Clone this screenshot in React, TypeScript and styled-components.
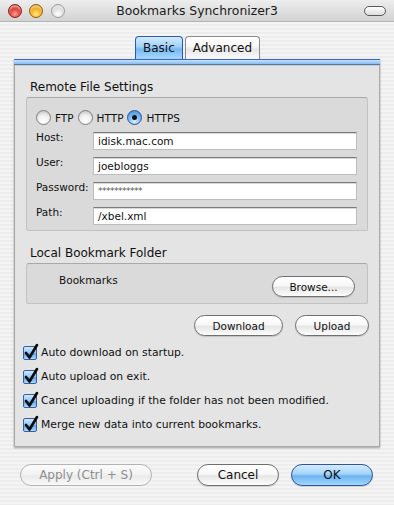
import React from "react";
import styled, { createGlobalStyle, css } from "styled-components";

const Global = createGlobalStyle`
  html, body { margin: 0; padding: 0; }
  body {
    width: 394px;
    height: 505px;
    overflow: hidden;
    font-family: "DejaVu Sans", "Liberation Sans", sans-serif;
    color: #111;
    background: repeating-linear-gradient(180deg, #ededed 0px, #ededed 2px, #f4f4f4 2px, #f4f4f4 4px);
  }
`;

const Window = styled.div`
  width: 394px;
  height: 505px;
  display: flex;
  flex-direction: column;
`;

const TitleBar = styled.div`
  height: 21px;
  border-bottom: 1px solid #b4b4b4;
  background: linear-gradient(180deg, #eeeeee 0%, #e0e0e0 50%, #d2d2d2 100%);
  display: grid;
  grid-template-columns: 1fr auto 1fr;
  align-items: center;
`;

const Lights = styled.div`
  display: flex;
  gap: 7px;
  padding-left: 8px;
  align-items: center;
`;

const Light = styled.span<{ $c: "red" | "orange" | "gray" }>`
  width: 14px;
  height: 14px;
  border-radius: 50%;
  box-sizing: border-box;
  ${(p) =>
    p.$c === "red"
      ? css`
          border: 1px solid #8c1e1a;
          background: radial-gradient(circle at 50% 75%, #ff9e95 0%, #e0443c 45%, #a81912 100%);
        `
      : p.$c === "orange"
      ? css`
          border: 1px solid #9a5a00;
          background: radial-gradient(circle at 50% 75%, #ffe88a 0%, #f5b422 45%, #c16f00 100%);
          margin-right: 1px;
        `
      : css`
          border: 1px solid #9d9d9d;
          background: radial-gradient(circle at 50% 75%, #ffffff 0%, #e2e2e2 45%, #b5b5b5 100%);
        `}
  box-shadow: inset 0 2px 2px rgba(255, 255, 255, 0.6);
`;

const Title = styled.div`
  font-size: 12.4px;
  color: #1a1a1a;
  line-height: 14px;
  padding-top: 1px;
`;

const ToolbarPill = styled.span`
  justify-self: end;
  margin-right: 8px;
  width: 20px;
  height: 8px;
  border: 1px solid #5a5a5a;
  border-radius: 5px;
  background: linear-gradient(180deg, #ffffff, #dcdcdc);
`;

const Tabs = styled.div`
  display: flex;
  justify-content: center;
  gap: 2px;
  margin-top: 14px;
  padding-left: 1px;
`;

const Tab = styled.div<{ $active?: boolean }>`
  height: 23px;
  box-sizing: border-box;
  padding: 0 7px;
  font-size: 12px;
  line-height: 22px;
  border-radius: 4px 4px 0 0;
  border: 1px solid ${(p) => (p.$active ? "#2f58b4" : "#8a8a8a")};
  border-bottom: none;
  color: #111;
  background: ${(p) =>
    p.$active
      ? "linear-gradient(180deg, #d3ebfd 0%, #9fd0f7 45%, #76b7f0 55%, #a7daff 100%)"
      : "linear-gradient(180deg, #ffffff 0%, #f6f6f6 45%, #e6e6e6 55%, #fbfbfb 100%)"};
`;

const Pane = styled.div`
  margin: 0 14px;
  display: flex;
  flex-direction: column;
  box-shadow: 0 1px 2px rgba(0, 0, 0, 0.35);
`;

const PaneStrip = styled.div`
  height: 4px;
  border-top: 1px solid #3c66c0;
  border-bottom: 1px solid #5677a8;
  background: linear-gradient(180deg, #c5e2fb, #86bdf0);
`;

const PaneBody = styled.div`
  background: #e4e4e4;
  border: 1px solid #a8a8a8;
  border-top: 1px solid #c9c9c9;
  padding: 14px 11px 13px 11px;
  display: flex;
  flex-direction: column;
`;

const GroupTitle = styled.div<{ $gap?: number }>`
  font-size: 12px;
  line-height: 14px;
  color: #111;
  padding-left: 4px;
  margin-top: ${(p) => p.$gap ?? 0}px;
  margin-bottom: 3px;
`;

const GroupBox = styled.div`
  background: #dadada;
  border: 1px solid #c2c2c2;
  border-top-color: #a9a9a9;
  border-radius: 3px 3px 2px 2px;
`;

const RemoteBox = styled(GroupBox)`
  padding: 12px 10px 5px 9px;
  display: flex;
  flex-direction: column;
  gap: 7px;
`;

const RadioRow = styled.div`
  display: flex;
  align-items: center;
  height: 15px;
`;

const RadioItem = styled.label`
  display: flex;
  align-items: center;
  gap: 4px;
  font-size: 10.5px;
  margin-right: 4px;
`;

const RadioDot = styled.span<{ $on?: boolean }>`
  width: 15px;
  height: 15px;
  box-sizing: border-box;
  border-radius: 50%;
  display: flex;
  align-items: center;
  justify-content: center;
  border: 1px solid ${(p) => (p.$on ? "#30519a" : "#7d7d7d")};
  background: ${(p) =>
    p.$on
      ? "radial-gradient(circle at 50% 80%, #d6f0ff 0%, #76b9f2 50%, #3d7fd6 100%)"
      : "radial-gradient(circle at 50% 80%, #ffffff 0%, #f0f0f0 50%, #b8b8b8 100%)"};
  &::after {
    content: "";
    display: ${(p) => (p.$on ? "block" : "none")};
    width: 5px;
    height: 5px;
    border-radius: 50%;
    background: #111;
  }
`;

const FieldGrid = styled.div`
  display: grid;
  grid-template-columns: 57px 1fr;
  row-gap: 7px;
`;

const FieldLabel = styled.div`
  font-size: 10.5px;
  line-height: 13px;
  margin-top: -1px;
`;

const Input = styled.div<{ $secret?: boolean }>`
  height: 18px;
  box-sizing: border-box;
  background: #fff;
  border: 1px solid #bdbdbd;
  border-top: 1px solid #7b7b7b;
  box-shadow: inset 0 1px 0 #d8d8d8;
  padding-left: 4px;
  font-size: ${(p) => (p.$secret ? "9px" : "10.5px")};
  line-height: ${(p) => (p.$secret ? "17px" : "16px")};
  color: ${(p) => (p.$secret ? "#555" : "#111")};
  letter-spacing: ${(p) => (p.$secret ? "-0.5px" : "0")};
`;

const LocalBox = styled(GroupBox)`
  padding: 12px 12px 6px 32px;
  display: flex;
  justify-content: space-between;
  align-items: flex-start;
`;

const FolderName = styled.div`
  font-size: 10.5px;
  line-height: 13px;
  margin-top: -2px;
`;

const Button = styled.button<{ $size?: "small" | "large"; $w: number; $default?: boolean }>`
  width: ${(p) => p.$w}px;
  height: ${(p) => (p.$size === "large" ? 22 : 21)}px;
  border-radius: 11px;
  box-sizing: border-box;
  font-family: "DejaVu Sans", "Liberation Sans", sans-serif;
  font-size: ${(p) => (p.$size === "large" ? "12px" : "10.5px")};
  color: #111;
  padding: 0;
  border: 1px solid ${(p) => (p.$default ? "#34529e" : "#6f6f6f")};
  background: ${(p) =>
    p.$default
      ? "linear-gradient(180deg, #d3ecfe 0%, #a4d4fa 45%, #6eb4f0 55%, #9fd8ff 100%)"
      : "linear-gradient(180deg, #ffffff 0%, #f8f8f8 45%, #e6e6e6 55%, #fdfdfd 100%)"};
  box-shadow: 0 1px 1px rgba(0, 0, 0, 0.15);
  &:disabled {
    color: #8e8e8e;
    border-color: #b4b4b4;
    background: linear-gradient(180deg, #fbfbfb 0%, #f3f3f3 45%, #ebebeb 55%, #f8f8f8 100%);
    box-shadow: none;
  }
`;

const ActionRow = styled.div`
  display: flex;
  justify-content: flex-end;
  gap: 12px;
  margin-top: 11px;
  margin-right: -1px;
`;

const CheckList = styled.div`
  display: flex;
  flex-direction: column;
  gap: 6px;
  margin: 7px 0 0 -3px;
`;

const CheckRow = styled.label`
  display: flex;
  align-items: center;
  gap: 4px;
  height: 18px;
  line-height: 13px;
  font-size: 10.8px;
`;

const CheckBox = styled.span`
  position: relative;
  width: 14px;
  height: 14px;
  box-sizing: border-box;
  border: 1px solid #3a5d9e;
  border-radius: 2px;
  background: linear-gradient(180deg, #cfe8fd 0%, #8fc6f5 50%, #5aa3ea 55%, #a6dafe 100%);
  margin-top: 2px;
  svg {
    position: absolute;
    left: -1px;
    top: -4px;
  }
`;

const Footer = styled.div`
  display: flex;
  align-items: center;
  margin-top: 17px;
  padding: 0 21px 0 20px;
  gap: 12px;
`;

const Spacer = styled.div`
  flex: 1;
`;

const Check = () => (
  <CheckBox>
    <svg width="17" height="18" viewBox="0 0 17 18">
      <path d="M3 10 L6.5 14.5 L14 2" fill="none" stroke="#0a0a0a" strokeWidth="2.6" strokeLinecap="round" strokeLinejoin="round" />
    </svg>
  </CheckBox>
);

const checks = [
  "Auto download on startup.",
  "Auto upload on exit.",
  "Cancel uploading if the folder has not been modified.",
  "Merge new data into current bookmarks.",
];

export default function App() {
  return (
    <Window>
      <Global />
      <TitleBar>
        <Lights>
          <Light $c="red" />
          <Light $c="orange" />
          <Light $c="gray" />
        </Lights>
        <Title>Bookmarks Synchronizer3</Title>
        <ToolbarPill />
      </TitleBar>
      <Tabs>
        <Tab $active>Basic</Tab>
        <Tab>Advanced</Tab>
      </Tabs>
      <Pane>
        <PaneStrip />
        <PaneBody>
          <GroupTitle>Remote File Settings</GroupTitle>
          <RemoteBox>
            <RadioRow>
              <RadioItem>
                <RadioDot />
                FTP
              </RadioItem>
              <RadioItem>
                <RadioDot />
                HTTP
              </RadioItem>
              <RadioItem>
                <RadioDot $on />
                HTTPS
              </RadioItem>
            </RadioRow>
            <FieldGrid>
              <FieldLabel>Host:</FieldLabel>
              <Input>idisk.mac.com</Input>
              <FieldLabel>User:</FieldLabel>
              <Input>joebloggs</Input>
              <FieldLabel>Password:</FieldLabel>
              <Input $secret>***********</Input>
              <FieldLabel>Path:</FieldLabel>
              <Input>/xbel.xml</Input>
            </FieldGrid>
          </RemoteBox>
          <GroupTitle $gap={15}>Local Bookmark Folder</GroupTitle>
          <LocalBox>
            <FolderName>Bookmarks</FolderName>
            <Button $w={83}>Browse...</Button>
          </LocalBox>
          <ActionRow>
            <Button $w={89}>Download</Button>
            <Button $w={74}>Upload</Button>
          </ActionRow>
          <CheckList>
            {checks.map((c) => (
              <CheckRow key={c}>
                <Check />
                {c}
              </CheckRow>
            ))}
          </CheckList>
        </PaneBody>
      </Pane>
      <Footer>
        <Button $size="large" $w={132} disabled>
          Apply (Ctrl + S)
        </Button>
        <Spacer />
        <Button $size="large" $w={82}>
          Cancel
        </Button>
        <Button $size="large" $w={82} $default>
          OK
        </Button>
      </Footer>
    </Window>
  );
}
